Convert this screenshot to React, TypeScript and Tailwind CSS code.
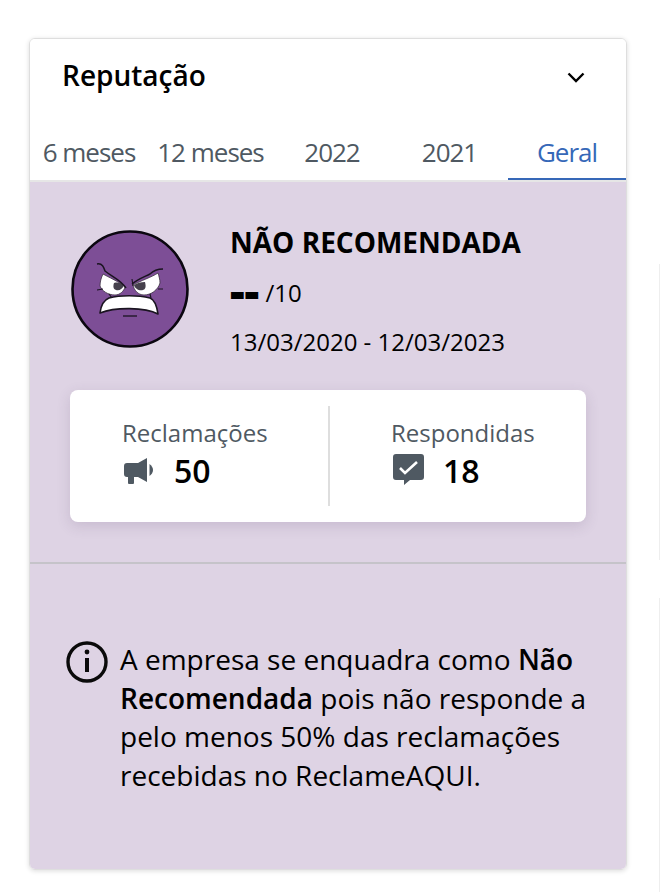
const font = { fontFamily: '"Open Sans", sans-serif' };

function Face() {
  return (
    <svg width="120" height="120" viewBox="0 0 120 120" className="shrink-0">
      <circle cx="60" cy="60" r="57.500" fill="#7d4e96" stroke="#0b0710" strokeWidth="2.600" />
      <path d="M33 45C38 48 50 53 55 58C54 62 50 66 45 66C38 66 32 62 30 57C30 53 31 49 33 45Z" fill="#fff" stroke="#3a3040" strokeWidth="0.800" />
      <path d="M88 44C82 48 70 52 63 56C64 61 68 66 74 66C81 66 88 61 90 54C90 51 89 47 88 44Z" fill="#fff" stroke="#3a3040" strokeWidth="0.800" />
      <path d="M54 56C53 60 49 62 46 61C43 60 43 57 44 54C48 53 51 54 54 56Z" fill="#45404c" />
      <path d="M64 56C65 60 69 62 73 61C76 60 76 57 75 53C71 53 67 54 64 56Z" fill="#45404c" />
      <path d="M27 35C33 34 34 39 35 42C41 47 51 51 56 59" fill="none" stroke="#1a1420" strokeWidth="1.500" />
      <path d="M93 40C87 40 83 42 80 45C74 48 68 50 62 55" fill="none" stroke="#1a1420" strokeWidth="1.500" />
      <path d="M27 61L33 60M39 65L42 69M62 50L63 57M80 65L81 69M93 60L88 60" fill="none" stroke="#1a1420" strokeWidth="1.100" />
      <path d="M30 84C31 76 34 71 39 69C50 66 68 66 80 69C85 71 87 78 88 85C75 78 45 78 30 84Z" fill="#fff" stroke="#1a1420" strokeWidth="1.600" strokeLinejoin="round" />
      <path d="M53 87H67" stroke="#1a1420" strokeWidth="1.300" />
    </svg>
  );
}

function Megaphone() {
  return (
    <svg width="30" height="28" viewBox="0 0 30 28" fill="#4f5962">
      <path d="M0 9a3 3 0 0 1 3-3h11l9-5v24l-9-5H10v6a1 1 0 0 1-1 1H5a1 1 0 0 1-1-1v-6H3a3 3 0 0 1-3-3Z" />
      <path d="M25.500 7c2 1.500 3.500 3.500 3.500 6s-1.500 4.500-3.500 6Z" />
    </svg>
  );
}

function CheckBubble() {
  return (
    <svg width="31" height="31" viewBox="0 0 31 31" className="mb-[4px]">
      <path d="M3 0h25a3 3 0 0 1 3 3v20a3 3 0 0 1-3 3H17l-6 5v-5H3a3 3 0 0 1-3-3V3a3 3 0 0 1 3-3Z" fill="#4f5962" />
      <path d="M7 14l5 5 12-11" fill="none" stroke="#fff" strokeWidth="2.600" />
    </svg>
  );
}

function Tabs() {
  return (
    <div className="flex h-[72px] items-start border-b-2 border-[#e6e6e6]">
      <div className="w-[118px] pt-[26px] text-center text-[26px] leading-[32px] tracking-[-1px] text-[#4f5962]">6 meses</div>
      <div className="w-[125px] pt-[26px] text-center text-[26px] leading-[32px] tracking-[-1px] text-[#4f5962]">12 meses</div>
      <div className="w-[118px] pt-[26px] text-center text-[26px] leading-[32px] tracking-[-1px] text-[#4f5962]">2022</div>
      <div className="w-[117px] pt-[26px] text-center text-[26px] leading-[32px] tracking-[-1px] text-[#4f5962]">2021</div>
      <div className="h-[70px] w-[118px] border-b-2 border-[#3668b8] pt-[26px] text-center text-[26px] leading-[32px] tracking-[-1px] text-[#3668b8]">Geral</div>
    </div>
  );
}

export default function App() {
  return (
    <div className="relative h-[892px] w-[660px] overflow-hidden bg-white pl-[29px] pt-[38px]" style={font}>
      <div className="absolute left-[659px] top-[264px] h-[296px] w-px bg-[#eeeeee]" />
      <div className="absolute left-[659px] top-[598px] h-[294px] w-px bg-[#eeeeee]" />
      <div className="h-[832px] w-[598px] overflow-hidden rounded-[6px] border border-[#dedede] shadow-[0_1px_5px_rgba(0,0,0,0.14)]">
        <div className="flex h-[71px] items-center justify-between bg-white pl-[32px] pr-[40px]">
          <span className="text-[28px] font-semibold leading-[34px] text-black">Reputação</span>
          <svg width="20" height="20" viewBox="0 0 20 20" fill="none" stroke="#000" strokeWidth="2.400" className="mt-[5px]">
            <path d="M2.500 6.500l7.500 7.500 7.500-7.500" />
          </svg>
        </div>
        <Tabs />
        <div className="h-[688px] bg-[#ded3e4]">
          <div className="h-[382px] border-b-2 border-[#c5c3c9] px-[40px] pt-[47px]">
            <div className="flex gap-[40px]">
              <Face />
              <div className="flex flex-col text-black">
                <span className="text-[28px] font-bold leading-[26px]">NÃO RECOMENDADA</span>
                <span className="mt-[19px] h-[32px] text-[24px] leading-[32px]">
                  <span className="align-[-6px] text-[46px] font-extrabold leading-[32px]">--</span> /10
                </span>
                <span className="mt-[20px] text-[24px] leading-[32px]">13/03/2020 - 12/03/2023</span>
              </div>
            </div>
            <div className="mt-[32px] flex h-[132px] w-[516px] items-center rounded-[8px] bg-white shadow-[0_4px_14px_rgba(80,60,100,0.16)]">
              <div className="w-[258px] pb-[4px] pl-[52px]">
                <div className="text-[24px] leading-[32px] text-[#4f5962]">Reclamações</div>
                <div className="mt-[2px] flex items-center gap-[20px] pl-[2px]">
                  <Megaphone />
                  <span className="text-[32px] font-semibold leading-[40px] text-black">50</span>
                </div>
              </div>
              <div className="h-[100px] w-[2px] bg-[#dedede]" />
              <div className="pb-[4px] pl-[61px]">
                <div className="text-[24px] leading-[32px] text-[#4f5962]">Respondidas</div>
                <div className="mt-[2px] flex items-center gap-[19px] pl-[2px]">
                  <CheckBubble />
                  <span className="text-[32px] font-semibold leading-[40px] text-black">18</span>
                </div>
              </div>
            </div>
          </div>
          <div className="flex gap-[11px] pl-[35px] pr-[30px] pt-[76px]">
            <svg width="44" height="44" viewBox="0 0 44 44" className="shrink-0" fill="none" stroke="#0a0a0a">
              <circle cx="22" cy="22" r="19" strokeWidth="3.400" />
              <path d="M22 18v14" strokeWidth="4" />
              <circle cx="22" cy="12" r="2.400" fill="#0a0a0a" stroke="none" />
            </svg>
            <p className="text-[28px] leading-[38.500px] text-black">
              A empresa se enquadra como <b className="font-semibold">Não Recomendada</b> pois não responde a pelo menos 50% das reclamações recebidas no ReclameAQUI.
            </p>
          </div>
        </div>
      </div>
    </div>
  );
}
